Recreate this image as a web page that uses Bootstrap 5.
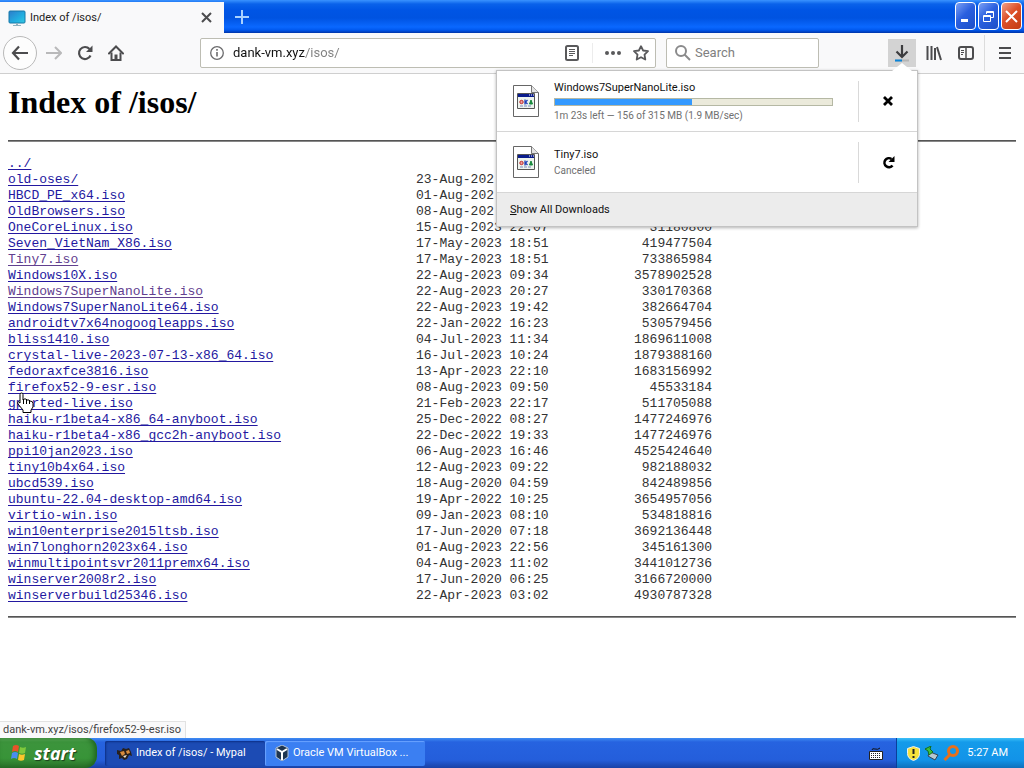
<!DOCTYPE html>
<html lang="en">
<head>
<meta charset="utf-8">
<meta name="viewport" content="width=device-width, initial-scale=1">
<title>Index of /isos/</title>
<link href="https://cdn.jsdelivr.net/npm/bootstrap@5.3.0/dist/css/bootstrap.min.css" rel="stylesheet">
<style>
body { font-family: Roboto, "Noto Sans", sans-serif; font-size: 11px; line-height: 16px; color: #222; background: #fff; }
button { font: inherit; }
svg { display: block; flex: none; }

/* title bar with tabs */
.titlebar { height: 33px; background: linear-gradient(#3a93ff 0, #0a62ea 4px, #0055e5 10px, #0053e1 18px, #0a68ff 27px, #0058ee 30px, #0034a8 33px); }
.tab { width: 224px; margin-top: 2px; background: #f9f9fa; padding: 0 4px 0 8px; }
.ghost { border: 0; background: transparent; padding: 0; color: inherit; display: flex; align-items: center; justify-content: center; flex: none; }
.captions { gap: 2px; padding: 2px; }
.caption-btn { width: 21px; height: 28px; padding: 0; border: 1px solid #fff; border-radius: 4px; background: linear-gradient(135deg, #7ba0f4, #2a5fdf 45%, #1c4fc8); display: flex; align-items: center; justify-content: center; }
.caption-btn.quit { background: linear-gradient(135deg, #f0a088, #dd5028 45%, #c23b12); }

/* navigation bar */
.navtools { height: 41px; background: #f9f9fa; border-bottom: 1px solid #cfcfcf; color: #4c4c4e; padding: 0 5px 0 3px; }
.navgroup { gap: 4px; }
.navleft { gap: 3px; }
.tool { width: 28px; height: 28px; }
.tool.open { background: #d3d3d3; }
.back { width: 34px; height: 34px; border: 1px solid #b9b9b9; border-radius: 50%; background: #fdfdfd; }
.field { height: 30px; border: 1px solid #bdbdb3; border-radius: 2px; background: #fff; }
.field input { border: 0; outline: 0; padding: 0; min-width: 0; background: transparent; font-size: 13px; line-height: 20px; color: #333; }
.field input::placeholder { color: #808080; opacity: 1; }
.urlbox { margin-left: 70px; padding-left: 2px; }
.urlbox .site-url { margin-left: 2px; color: transparent; caret-color: #111; background: linear-gradient(90deg, #111 72px, #808080 72px); -webkit-background-clip: text; background-clip: text; }
.url-split { width: 1px; height: 20px; background: #ececec; margin: 0 6px; }
.searchbox { width: 153px; margin: 0 69px 0 10px; }
.bar-split { width: 1px; height: 36px; background: #dcdcdc; margin-right: 2px; }

/* downloads panel */
.downloads { position: absolute; z-index: 5; top: 31px; right: -2px; width: 422px; background: #fff; border: 1px solid #c3c3c3; box-shadow: 0 1px 3px rgba(0,0,0,.3); color: #111; }
.downloads::before { content: ""; position: absolute; right: 5px; top: -8px; border: 10px solid transparent; border-top: 0; border-bottom: 8px solid #fff; }
.dl-item { height: 61px; border-bottom: 1px solid #d6d6d6; padding-left: 15px; }
.dl-info { width: 279px; margin-left: 14px; }
.dl-name { margin-bottom: 2px; }
.dl-meter { height: 8px; border: 1px solid #b5b8a4; background: #ebeadb; margin-bottom: 4px; }
.dl-fill { height: 6px; background: #3399ff; }
.dl-note { font-size: 10px; line-height: 12px; color: #707070; }
.dl-action { width: 59px; height: 41px; border-left: 1px solid #d9d9d9; color: #000; margin-left: auto; }
.dl-all { width: 100%; height: 33px; border: 0; background: #ececec; text-align: left; padding: 0 13px; color: #111; }

/* directory listing */
.listing { padding: 10px 8px 0; color: #000; }
.listing h1 { font: bold 32px/36px "Liberation Serif", serif; margin: 0 0 20px; }
.rule { margin: 0; border: 0; height: 2px; background: linear-gradient(#555 50%, #888 50%); opacity: 1; }
.files { font: 13px/16px "Liberation Mono", monospace; margin: 14px 0 12px; table-layout: fixed; width: 704px; color: #333; }
.files td { padding: 0; white-space: nowrap; height: 16px; }
.c-name { width: 408px; } .c-date { width: 144px; }
.files a { color: #2318a0; text-decoration: underline; text-underline-offset: 2px; text-decoration-skip-ink: none; }
.files a.seen { color: #62408f; }
.hand { position: absolute; left: 8px; top: 12px; pointer-events: none; }
.statustip { position: absolute; left: 0; bottom: 0; background: #f9f9fa; border: 1px solid #e2e2e2; border-width: 1px 1px 0 0; padding: 0 4px 0 3px; color: #444; }

/* taskbar */
.taskbar { height: 30px; background: linear-gradient(#3f8cf3 0, #2663e0 4px, #245edb 22px, #1941a5 30px); color: #fff; }
.start { width: 97px; height: 30px; border: 0; border-radius: 0 10px 12px 0; background: linear-gradient(#63b45f 0, #3c943c 4px, #389438 20px, #2a702a 30px); box-shadow: inset -3px 0 5px #1f661f; color: #fff; font: italic bold 18px/24px "Open Sans", sans-serif; text-shadow: 1px 1px 1px #1a3d1a; padding: 0 8px 0 10px; }
.task { width: 160px; height: 25px; border: 0; border-radius: 2px; color: #fff; background: #3b7ff2; box-shadow: inset 1px 1px 1px #6ba3ff; padding: 0 10px; }
.task.current { background: #1c4bb4; box-shadow: inset 1px 1px 2px #0c2f86; padding-left: 12px; }
.kbd { margin-right: 13px; }
.tray { height: 30px; width: 128px; background: linear-gradient(#3cc0f8 0, #149bea 4px, #1293e8 22px, #0f70bb 30px); border-left: 1px solid #0a3f9b; padding: 0 16px 0 10px; }
</style>
</head>
<body class="d-flex flex-column min-vh-100">

<header>
  <div class="titlebar d-flex">
    <div class="tab d-flex align-items-center">
      <svg width="18" height="16" viewBox="0 0 18 16"><defs><linearGradient id="scr" x2="1" y2="1"><stop stop-color="#2c7ccb"/><stop offset=".6" stop-color="#21aee0"/><stop offset="1" stop-color="#35c9e0"/></linearGradient></defs><rect x="1" y="1" width="16" height="12" rx="1" fill="url(#scr)" stroke="#1578a8"/><path d="M8 13h2v2h3v1H5v-1h3z" fill="#8fb1bf"/></svg>
      <span class="ms-1 flex-grow-1">Index of /isos/</span>
      <button class="ghost tool" aria-label="Close tab"><svg width="11" height="11" viewBox="0 0 11 11" stroke="#4c4c4e" stroke-width="2"><path d="M1 1l9 9M10 1l-9 9"/></svg></button>
    </div>
    <button class="ghost tool ms-1 align-self-center" aria-label="New tab"><svg width="14" height="14" viewBox="0 0 14 14" stroke="#a9d2ff" stroke-width="2"><path d="M7 0v14M0 7h14"/></svg></button>
    <div class="captions d-flex ms-auto">
      <button class="caption-btn" aria-label="Minimize"><svg width="15" height="15" viewBox="0 0 15 15"><path d="M3 10h7v3H3z" fill="#fff"/></svg></button>
      <button class="caption-btn" aria-label="Restore"><svg width="13" height="13" viewBox="0 0 13 13" fill="none" stroke="#fff"><path d="M4.500 4V1.500h7v6H9M4 2.500h8M1.500 5.500h7v6h-7zM1 6.500h8"/></svg></button>
      <button class="caption-btn quit" aria-label="Close"><svg width="13" height="13" viewBox="0 0 13 13" stroke="#fff" stroke-width="2"><path d="M1 1l11 11M12 1L1 12"/></svg></button>
    </div>
  </div>

  <nav class="navtools d-flex align-items-center">
    <div class="navleft d-flex align-items-center">
      <button class="ghost back" aria-label="Back"><svg width="18" height="16" viewBox="0 0 18 16" fill="none" stroke="currentColor" stroke-width="2.200"><path d="M8 1.500L2 8l6 6.500M2 8h15"/></svg></button>
      <button class="ghost tool" aria-label="Forward"><svg width="16" height="14" viewBox="0 0 16 14" fill="none" stroke="#b9b9ba" stroke-width="2"><path d="M9 1l6 6-6 6M0 7h14"/></svg></button>
      <button class="ghost tool" aria-label="Reload"><svg width="16" height="16" viewBox="0 0 16 16" fill="none"><path d="M13.500 10.500A6 6 0 1 1 12.500 4" stroke="currentColor" stroke-width="2.200"/><path d="M15.500 .5V7H9z" fill="currentColor"/></svg></button>
      <button class="ghost tool" aria-label="Home"><svg width="16" height="16" viewBox="0 0 16 16" fill="none" stroke="currentColor" stroke-width="2"><path d="M1 8.500L8 1.500l7 7" stroke-linecap="round"/><path d="M3.500 7.500V15h9V7.500"/><path d="M8 9.500V15" stroke-width="3"/></svg></button>
    </div>
    <div class="field d-flex align-items-center flex-grow-1 urlbox">
      <button class="ghost tool" aria-label="Site information"><svg width="14" height="14" viewBox="0 0 14 14" fill="none" stroke="#6b6b6d"><circle cx="7" cy="7" r="6.300" stroke-width="1.300"/><path d="M7 6v4.500M7 3v1.700" stroke-width="1.600"/></svg></button>
      <input class="site-url flex-grow-1" type="text" aria-label="Address" value="dank-vm.xyz/isos/">
      <button class="ghost tool" aria-label="Reader view"><svg width="14" height="16" viewBox="0 0 14 16" fill="none" stroke="#59595b"><rect x="1" y="1" width="12" height="14" rx="1.500" stroke-width="2"/><path d="M4 4.500h6M4 6.500h6M4 8.500h6M4 10.500h4"/></svg></button>
      <div class="url-split"></div>
      <button class="ghost tool" aria-label="Page actions"><svg width="16" height="4" viewBox="0 0 16 4" fill="#59595b"><circle cx="2" cy="2" r="2"/><circle cx="8" cy="2" r="2"/><circle cx="14" cy="2" r="2"/></svg></button>
      <button class="ghost tool" aria-label="Bookmark"><svg width="16" height="16" viewBox="0 0 16 16" fill="none" stroke="#59595b" stroke-width="1.800" stroke-linejoin="round"><path d="M8 1.200l2.100 4.300 4.900.7-3.500 3.400.8 4.900L8 12.200l-4.300 2.300.8-4.900L1 6.200l4.900-.7z"/></svg></button>
    </div>
    <div class="field searchbox d-flex align-items-center px-2">
      <svg width="16" height="16" viewBox="0 0 16 16" fill="none" stroke="#8a8a8b" stroke-width="2"><circle cx="6" cy="6" r="5"/><path d="M9.500 9.500L15 15"/></svg>
      <input class="w-100 ms-1" type="search" placeholder="Search" aria-label="Search">
    </div>
    <div class="navgroup d-flex align-items-center">
      <div class="position-relative">
        <button class="ghost tool open" aria-label="Downloads"><svg width="16" height="17" viewBox="0 0 16 17" fill="none" stroke="#3c3c3e" stroke-width="2.200"><path d="M8 0v12M2.500 6.500L8 12l5.500-5.500"/><path d="M1 15.500h14" stroke="#b5b5b5" stroke-width="2"/><path d="M1 15.500h7" stroke="#0a84d8" stroke-width="2"/></svg></button>
        <section class="downloads" aria-label="Downloads">
          <div class="dl-item d-flex align-items-center">
            <svg width="28" height="32" viewBox="0 0 28 32"><path d="M1.500 .5h18l7 7v24h-25z" fill="#fff" stroke="#666"/><path d="M19.500 .5v7h7" fill="#e4e4e4" stroke="#777"/><path d="M5.500 8.500h17v15h-17z" fill="#eef4ee" stroke="#555"/><path d="M6 9h16v3H6z" fill="#0a1c8c"/><path d="M17 10h1M19 10h1M21 10h1" stroke="#fff"/><circle cx="9.500" cy="17" r="1.700" fill="#e8a0a0" stroke="#c22a2a"/><path d="M13 14.500v5M15.500 15l-2 2 2 2" stroke="#203fb8" stroke-width="1.300" fill="none"/><path d="M19 15l1.500 4h-3z" fill="#178a3c" stroke="#178a3c"/><path d="M8 21h12" stroke="#7a8cc0" stroke-dasharray="3 1"/></svg>
            <div class="dl-info"><div class="dl-name">Windows7SuperNanoLite.iso</div>
              <div class="dl-meter" role="progressbar" aria-label="Download progress" aria-valuenow="156" aria-valuemin="0" aria-valuemax="315"><div class="dl-fill" style="width:49.5%"></div></div>
              <div class="dl-note">1m 23s left — 156 of 315 MB (1.9 MB/sec)</div></div>
            <button class="ghost dl-action" aria-label="Cancel download"><svg width="10" height="10" viewBox="0 0 10 10" stroke="currentColor" stroke-width="2.800"><path d="M1 1l8 8M9 1L1 9"/></svg></button>
          </div>
          <div class="dl-item d-flex align-items-center">
            <svg width="28" height="32" viewBox="0 0 28 32"><path d="M1.500 .5h18l7 7v24h-25z" fill="#fff" stroke="#666"/><path d="M19.500 .5v7h7" fill="#e4e4e4" stroke="#777"/><path d="M5.500 8.500h17v15h-17z" fill="#eef4ee" stroke="#555"/><path d="M6 9h16v3H6z" fill="#0a1c8c"/><path d="M17 10h1M19 10h1M21 10h1" stroke="#fff"/><circle cx="9.500" cy="17" r="1.700" fill="#e8a0a0" stroke="#c22a2a"/><path d="M13 14.500v5M15.500 15l-2 2 2 2" stroke="#203fb8" stroke-width="1.300" fill="none"/><path d="M19 15l1.500 4h-3z" fill="#178a3c" stroke="#178a3c"/><path d="M8 21h12" stroke="#7a8cc0" stroke-dasharray="3 1"/></svg>
            <div class="dl-info"><div class="dl-name">Tiny7.iso</div><div class="dl-note">Canceled</div></div>
            <button class="ghost dl-action" aria-label="Retry download"><svg width="13" height="13" viewBox="0 0 13 13" fill="none"><path d="M10.500 9.500A4.500 4.500 0 1 1 9.500 3" stroke="currentColor" stroke-width="2.600"/><path d="M12.500 0v6h-6z" fill="currentColor"/></svg></button>
          </div>
          <button class="dl-all d-block"><u>S</u>how All Downloads</button>
        </section>
      </div>
      <button class="ghost tool" aria-label="Library"><svg width="16" height="16" viewBox="0 0 16 16" fill="none" stroke="currentColor" stroke-width="2"><path d="M1.500 1v14M5.500 1v14M9 3v12M11 2l4 13"/></svg></button>
      <button class="ghost tool" aria-label="Sidebars"><svg width="16" height="14" viewBox="0 0 16 14" fill="none" stroke="currentColor"><rect x="1" y="1" width="14" height="12" rx="2" stroke-width="2"/><path d="M8 1v12" stroke-width="1.500"/><path d="M3 4.500h3M3 6.500h3M3 8.500h2"/></svg></button>
      <div class="bar-split"></div>
      <button class="ghost tool" aria-label="Menu"><svg width="12" height="12" viewBox="0 0 12 12" stroke="currentColor" stroke-width="2"><path d="M0 1h12M0 6h12M0 11h12"/></svg></button>
    </div>
  </nav>
</header>

<main class="flex-grow-1 position-relative">
  <div class="listing">
    <h1>Index of /isos/</h1>
    <hr class="rule">
    <table class="files">
      <colgroup><col class="c-name"><col class="c-date"><col></colgroup>
      <tbody>
        <tr><td><a href="#">../</a></td><td></td><td></td></tr>
        <tr><td><a href="#">old-oses/</a></td><td>23-Aug-202</td><td></td></tr>
        <tr><td><a href="#">HBCD_PE_x64.iso</a></td><td>01-Aug-202</td><td></td></tr>
        <tr><td><a href="#">OldBrowsers.iso</a></td><td>08-Aug-202</td><td></td></tr>
        <tr><td><a href="#">OneCoreLinux.iso</a></td><td>15-Aug-2023 22:07</td><td class="text-end">31180800</td></tr>
        <tr><td><a href="#">Seven_VietNam_X86.iso</a></td><td>17-May-2023 18:51</td><td class="text-end">419477504</td></tr>
        <tr><td><a class="seen" href="#">Tiny7.iso</a></td><td>17-May-2023 18:51</td><td class="text-end">733865984</td></tr>
        <tr><td><a href="#">Windows10X.iso</a></td><td>22-Aug-2023 09:34</td><td class="text-end">3578902528</td></tr>
        <tr><td><a class="seen" href="#">Windows7SuperNanoLite.iso</a></td><td>22-Aug-2023 20:27</td><td class="text-end">330170368</td></tr>
        <tr><td><a href="#">Windows7SuperNanoLite64.iso</a></td><td>22-Aug-2023 19:42</td><td class="text-end">382664704</td></tr>
        <tr><td><a href="#">androidtv7x64nogoogleapps.iso</a></td><td>22-Jan-2022 16:23</td><td class="text-end">530579456</td></tr>
        <tr><td><a href="#">bliss1410.iso</a></td><td>04-Jul-2023 11:34</td><td class="text-end">1869611008</td></tr>
        <tr><td><a href="#">crystal-live-2023-07-13-x86_64.iso</a></td><td>16-Jul-2023 10:24</td><td class="text-end">1879388160</td></tr>
        <tr><td><a href="#">fedoraxfce3816.iso</a></td><td>13-Apr-2023 22:10</td><td class="text-end">1683156992</td></tr>
        <tr><td class="position-relative"><a href="#">firefox52-9-esr.iso</a><svg class="hand" width="20" height="22" viewBox="0 0 20 22"><path d="M5.500 1q1.500 0 1.500 1.500V8l1-1h2l1 1h2l1 1q3 0 3 2.500V15l-2 3v2.500H7V18l-5-6q-1-2 .5-2.200L4 11V2.500Q4 1 5.500 1z" fill="#fff" stroke="#000"/><path d="M7.500 8v4M10.500 8v4M13.500 9v3" stroke="#000"/></svg></td><td>08-Aug-2023 09:50</td><td class="text-end">45533184</td></tr>
        <tr><td><a href="#">gparted-live.iso</a></td><td>21-Feb-2023 22:17</td><td class="text-end">511705088</td></tr>
        <tr><td><a href="#">haiku-r1beta4-x86_64-anyboot.iso</a></td><td>25-Dec-2022 08:27</td><td class="text-end">1477246976</td></tr>
        <tr><td><a href="#">haiku-r1beta4-x86_gcc2h-anyboot.iso</a></td><td>22-Dec-2022 19:33</td><td class="text-end">1477246976</td></tr>
        <tr><td><a href="#">ppi10jan2023.iso</a></td><td>06-Aug-2023 16:46</td><td class="text-end">4525424640</td></tr>
        <tr><td><a href="#">tiny10b4x64.iso</a></td><td>12-Aug-2023 09:22</td><td class="text-end">982188032</td></tr>
        <tr><td><a href="#">ubcd539.iso</a></td><td>18-Aug-2020 04:59</td><td class="text-end">842489856</td></tr>
        <tr><td><a href="#">ubuntu-22.04-desktop-amd64.iso</a></td><td>19-Apr-2022 10:25</td><td class="text-end">3654957056</td></tr>
        <tr><td><a href="#">virtio-win.iso</a></td><td>09-Jan-2023 08:10</td><td class="text-end">534818816</td></tr>
        <tr><td><a href="#">win10enterprise2015ltsb.iso</a></td><td>17-Jun-2020 07:18</td><td class="text-end">3692136448</td></tr>
        <tr><td><a href="#">win7longhorn2023x64.iso</a></td><td>01-Aug-2023 22:56</td><td class="text-end">345161300</td></tr>
        <tr><td><a href="#">winmultipointsvr2011premx64.iso</a></td><td>04-Aug-2023 11:02</td><td class="text-end">3441012736</td></tr>
        <tr><td><a href="#">winserver2008r2.iso</a></td><td>17-Jun-2020 06:25</td><td class="text-end">3166720000</td></tr>
        <tr><td><a href="#">winserverbuild25346.iso</a></td><td>22-Apr-2023 03:02</td><td class="text-end">4930787328</td></tr>
      </tbody>
    </table>
    <hr class="rule">
  </div>
  <div class="statustip">dank-vm.xyz/isos/firefox52-9-esr.iso</div>
</main>

<footer class="taskbar d-flex align-items-center">
  <button class="start d-flex align-items-center gap-1"><svg width="20" height="18" viewBox="0 0 20 18"><path d="M3 2q3-2 6 0L8 8Q5 6 2 8z" fill="#e8532a"/><path d="M10 3q3 1.500 6 0l-1 6q-3 1.500-6 0z" fill="#7fc83c"/><path d="M2 9q3-2 6 0l-1 6q-3-2-6 0z" fill="#4a8df0"/><path d="M9 10q3 1.500 6 0l-1 6q-3 1.500-6 0z" fill="#fbc62c"/></svg>start</button>
  <button class="task current d-flex align-items-center gap-1 ms-2"><svg width="15" height="15" viewBox="0 0 15 15"><path d="M0 4l4 1 2-3 3 1 3-1 2 4 1 4-3-1-2 4-3 1-2-2-3 1V9L0 8z" fill="#28201c"/><path d="M3 6l4-1 1 3-3 2zM9 5l3-1 1 3-3 1z" fill="#d98b3c"/><path d="M6 10l4-1-2 3z" fill="#f3e2c8"/></svg>Index of /isos/ - Mypal</button>
  <button class="task d-flex align-items-center"><svg class="me-1" width="14" height="16" viewBox="0 0 14 16"><path d="M7 0l6 3v9l-6 4-6-4V3z" fill="#1e3550" stroke="#b6c6d8"/><path d="M2 4l5 3 5-3M7 7v8" stroke="#fff" stroke-width="2" fill="none"/></svg>Oracle VM VirtualBox ...</button>
  <svg class="ms-auto kbd" width="14" height="13" viewBox="0 0 14 13"><path d="M3 3q0-2 3-1t5-1" fill="none" stroke="#111"/><path d="M.5 4.500h13v8H.5z" fill="#fff" stroke="#222"/><path d="M2 6.500h10M2 8.500h10M2 10.500h10" stroke="#222" stroke-dasharray="1 1"/></svg>
  <div class="tray d-flex align-items-center">
    <svg width="13" height="15" viewBox="0 0 13 15"><path d="M6.500 .5l6 2v5q0 5-6 7-6-2-6-7v-5z" fill="#f6e13c" stroke="#eee"/><path d="M6.500 3v5M6.500 10v2" stroke="#222" stroke-width="2"/></svg>
    <svg class="ms-1" width="15" height="15" viewBox="0 0 15 15"><path d="M6 6l8 3-3 5-7-4z" fill="#b8c8d0" stroke="#345"/><path d="M1 3l6-3-1 3 3 3-4 3-1-4z" fill="#3fbf3a" stroke="#146b1c"/></svg>
    <svg class="ms-1" width="16" height="16" viewBox="0 0 16 16" fill="none" stroke="#e8701a" stroke-width="3"><circle cx="10" cy="6" r="4.500"/><path d="M7 9.500L1.500 15"/></svg>
    <time class="ms-auto">5:27 AM</time>
  </div>
</footer>

<script src="https://cdn.jsdelivr.net/npm/bootstrap@5.3.0/dist/js/bootstrap.bundle.min.js"></script>
</body>
</html>
